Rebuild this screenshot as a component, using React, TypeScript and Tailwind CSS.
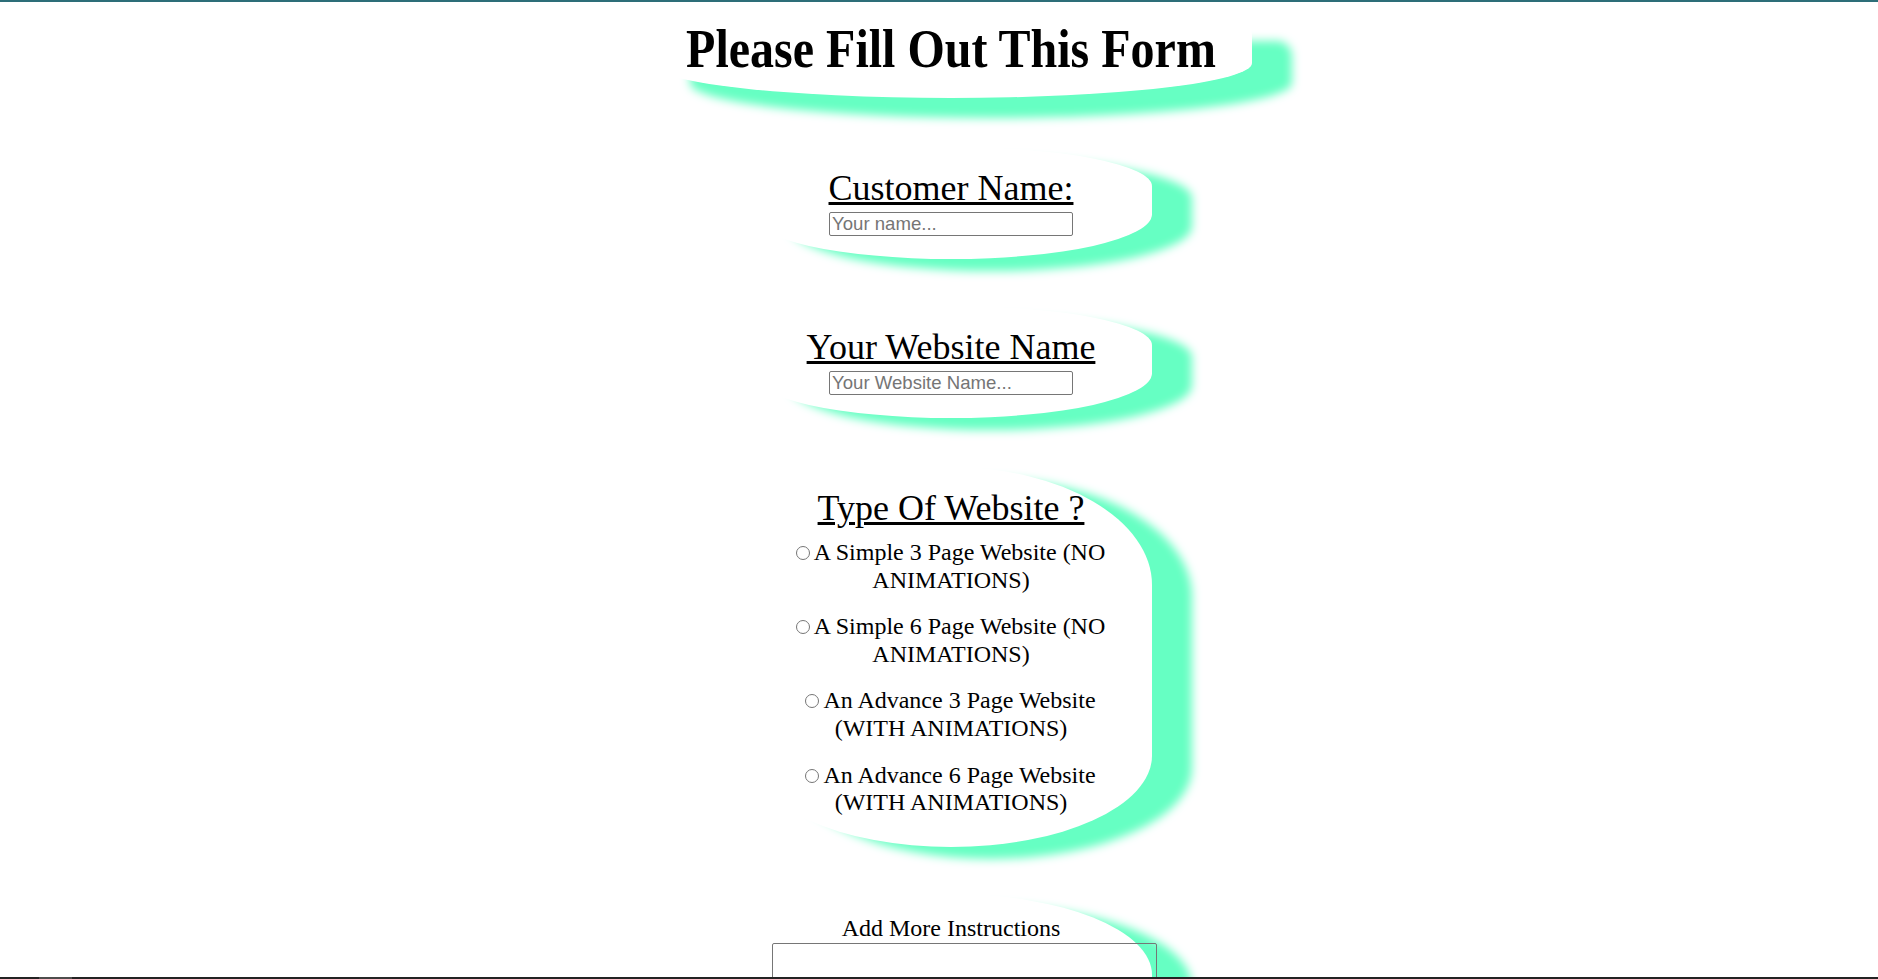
import React from 'react';

const serif = { fontFamily: '"Liberation Serif", "Times New Roman", serif' };

const options = [
  'A Simple 3 Page Website (NO ANIMATIONS)',
  'A Simple 6 Page Website (NO ANIMATIONS)',
  'An Advance 3 Page Website (WITH ANIMATIONS)',
  'An Advance 6 Page Website (WITH ANIMATIONS)',
];

const App: React.FC = () => {
  return (
    <div className="flex h-[979px] w-full flex-col overflow-hidden bg-white text-black" style={serif}>
      {/* thin strip along the top edge */}
      <div className="h-[2px] w-full shrink-0 bg-[#2d6e78]" />

      <form className="flex min-h-0 flex-1 flex-col items-center overflow-hidden pl-[24px]">
        {/* heading card */}
        <div className="mt-[19px] h-[77px] w-[602px] shrink-0 rounded-[0_15px_50%_50%/0_15px_35px_35px] bg-white pt-0 text-center shadow-[40px_20px_10px_#66ffc3]">
          <h1 className="inline-block scale-y-[1.15] text-[48px] font-bold leading-[55px]">Please Fill Out This Form</h1>
        </div>

        {/* customer name */}
        <div className="mt-[49px] flex h-[112px] w-[402px] shrink-0 flex-col items-center rounded-[50%/35%_35%_40%_40%] bg-white pt-[21px] shadow-[40px_12px_10px_#66ffc3]">
          <label htmlFor="customer" className="block text-[36px] leading-[41px] underline decoration-[3px]">
            Customer Name:
          </label>
          <input
            id="customer"
            type="text"
            placeholder="Your name..."
            className="mt-[3px] h-[24px] w-[244px] rounded-[2px] border border-[#767676] px-[2px] text-[18.6px] placeholder:text-[#757575]"
            style={{ fontFamily: '"Liberation Sans", Arial, sans-serif' }}
          />
        </div>

        {/* website name */}
        <div className="mt-[47px] flex h-[112px] w-[402px] shrink-0 flex-col items-center rounded-[50%/35%_35%_40%_40%] bg-white pt-[21px] shadow-[40px_12px_10px_#66ffc3]">
          <label htmlFor="website" className="block text-[36px] leading-[41px] underline decoration-[3px]">
            Your Website Name
          </label>
          <input
            id="website"
            type="text"
            placeholder="Your Website Name..."
            className="mt-[3px] h-[24px] w-[244px] rounded-[2px] border border-[#767676] px-[2px] text-[18.6px] placeholder:text-[#757575]"
            style={{ fontFamily: '"Liberation Sans", Arial, sans-serif' }}
          />
        </div>

        {/* type of website */}
        <div className="mt-[49px] flex h-[380px] w-[402px] shrink-0 flex-col items-center rounded-[50%/31%_31%_24%_24%] bg-white px-[30px] pt-[21px] text-center shadow-[40px_12px_10px_#66ffc3]">
          <div className="text-[36px] leading-[41px] underline decoration-[3px]">Type Of Website ?</div>
          <div className="mt-[10px] flex flex-col gap-[19px]">
            {options.map((opt) => (
              <label key={opt} className="block -indent-[5px] text-[24px] leading-[27.6px]">
                <input type="radio" name="type" className="m-[3px_4px_0px_4px] h-[14px] w-[14px]" />
                {opt}
              </label>
            ))}
          </div>
        </div>

        {/* instructions */}
        <div className="mt-[47px] flex h-[260px] w-[402px] shrink-0 flex-col items-center rounded-[50%/31%_31%_24%_24%] bg-white pt-[21px] shadow-[40px_12px_10px_#66ffc3]">
          <label htmlFor="notes" className="block text-[24px] leading-[27.6px]">
            Add More Instructions
          </label>
          <textarea id="notes" className="ml-[27px] mt-0 h-[80px] w-[385px] shrink-0 resize-none rounded-[2px] border border-[#767676]" />
        </div>
      </form>

      {/* dark strip at the bottom edge */}
      <div className="flex h-[2px] w-full shrink-0 bg-[#232323]">
        <div className="ml-[39px] h-full w-[33px] bg-[#4d4d4d]" />
      </div>
    </div>
  );
};

export default App;
